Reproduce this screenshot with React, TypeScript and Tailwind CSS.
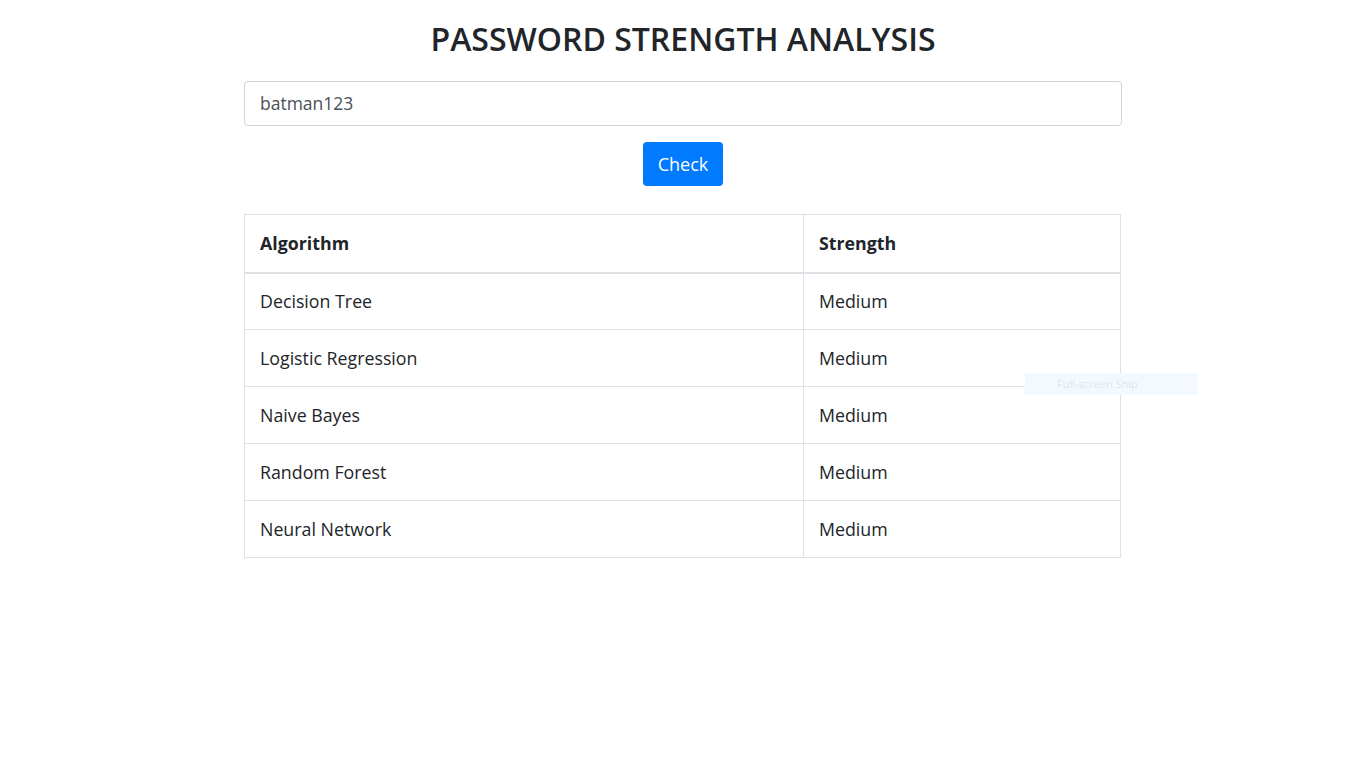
import React from "react";

const rows = [
  ["Decision Tree", "Medium"],
  ["Logistic Regression", "Medium"],
  ["Naive Bayes", "Medium"],
  ["Random Forest", "Medium"],
  ["Neural Network", "Medium"],
];

export default function App() {
  return (
    <div
      className="relative min-h-[768px] bg-white text-[#212529]"
      style={{ fontFamily: '"Open Sans", "Noto Sans", sans-serif' }}
    >
      <div className="mx-auto w-[878px] pt-[17px]">
        <h1 className="text-center text-[32px] font-semibold leading-[43px] text-[#212529]">
          PASSWORD STRENGTH ANALYSIS
        </h1>
        <div className="mt-[21px] flex h-[45px] items-center rounded-[4px] border border-[#ced4da] px-[15px] text-[17.5px] text-[#495057]">
          batman123
        </div>
        <div className="mt-4 flex justify-center">
          <button className="h-[44px] w-[80px] rounded-[4px] bg-[#007bff] text-[18px] text-white">
            Check
          </button>
        </div>
        <table className="mt-7 w-[877px] border-collapse text-[17.8px]">
          <thead>
            <tr>
              <th className="h-[58px] w-[559px] border border-b-2 border-[#dee2e6] px-[15px] text-left font-bold">
                Algorithm
              </th>
              <th className="h-[58px] border border-b-2 border-[#dee2e6] px-[15px] text-left font-bold">
                Strength
              </th>
            </tr>
          </thead>
          <tbody>
            {rows.map(([a, s]) => (
              <tr key={a}>
                <td className="h-[57px] border border-[#dee2e6] px-[15px]">{a}</td>
                <td className="h-[57px] border border-[#dee2e6] px-[15px]">{s}</td>
              </tr>
            ))}
          </tbody>
        </table>
      </div>
      <div className="absolute left-[1025px] top-[373px] flex h-[22px] w-[173px] items-center bg-[#f3f9ff] pl-[32px] text-[11px] text-[#e2e6ea]">
        Full-screen Snip
      </div>
    </div>
  );
}
